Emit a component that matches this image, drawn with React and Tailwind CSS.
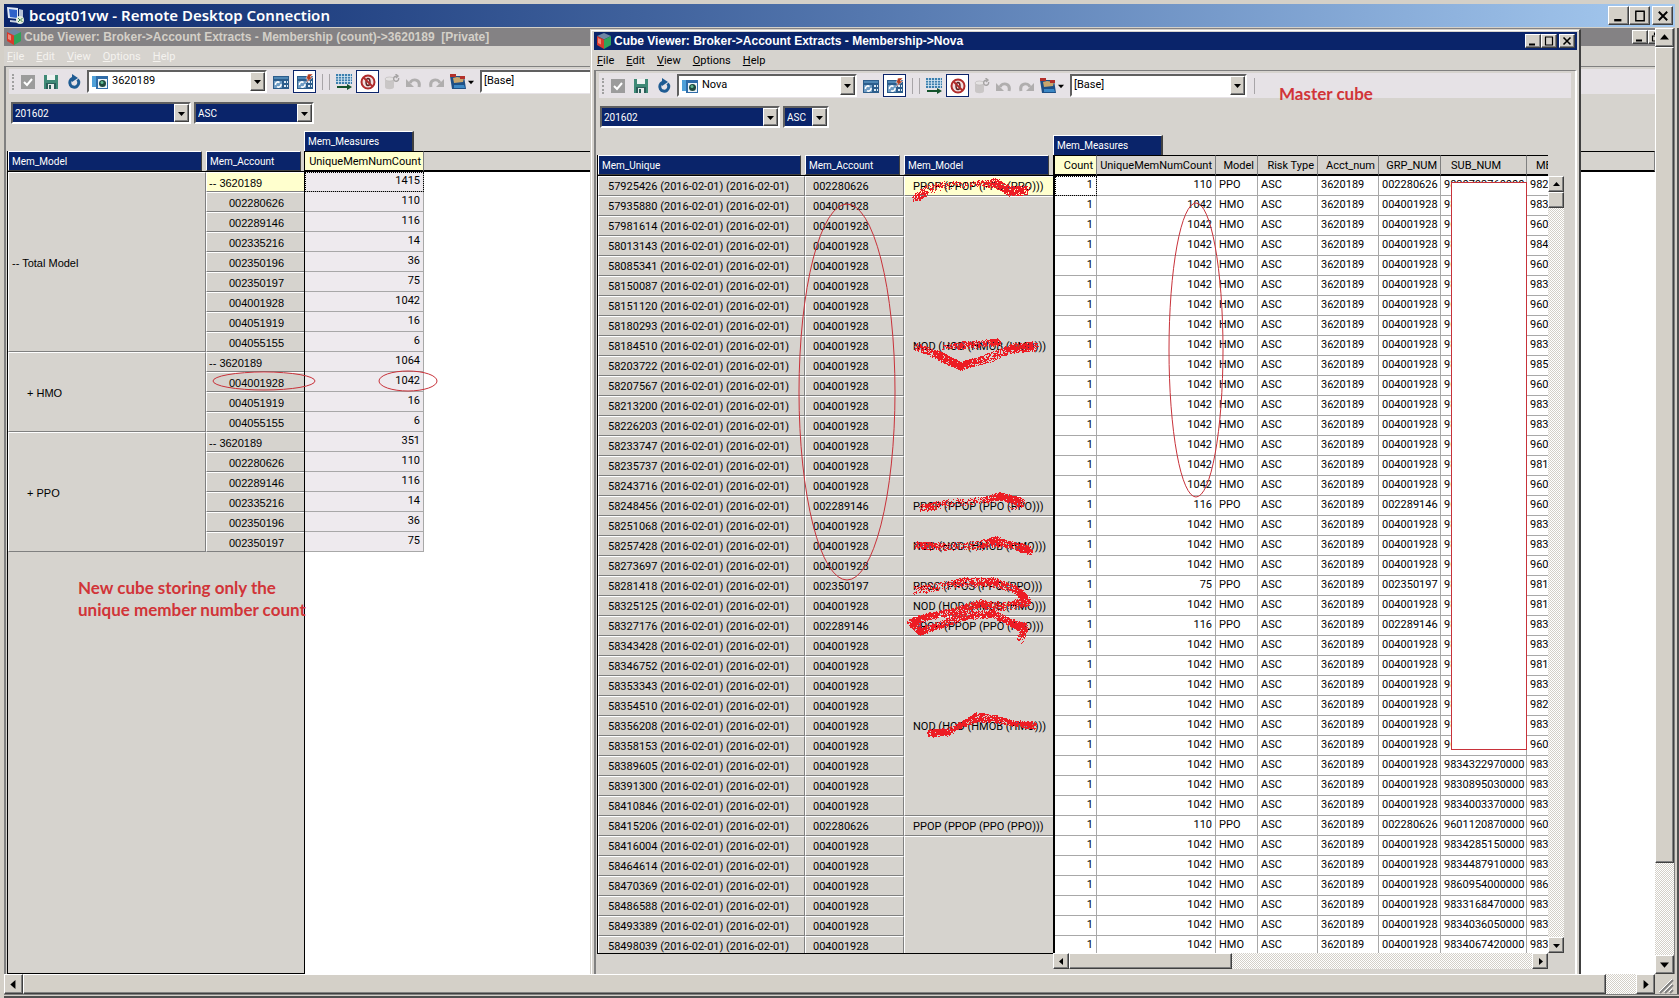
import clsx from "clsx";

const RAISED =
  "border border-t-white border-l-white border-r-[#404040] border-b-[#404040] bg-[#d4d0c8] shadow-[inset_-1px_-1px_0_#808080]";
const SUNKEN =
  "border-2 border-t-[#606060] border-l-[#606060] border-r-white border-b-white";
const TRACK =
  "bg-[repeating-conic-gradient(#ffffff_0_25%,#d4d0c8_0_50%)] bg-[length:2px_2px]";

const NOD = "NOD (HOD (HMOB (HMO)))";
const PPOP = "PPOP (PPOP (PPO (PPO)))";
const PPSC = "PPSC (PPOS (PPO (PPO)))";

// member id, SUB_NUM, start of the MEM_NUM column
const members = [
  ["57925426", "9820793760000", "982"],
  ["57935880", "983", "983"],
  ["57981614", "960", "960"],
  ["58013143", "984", "984"],
  ["58085341", "960", "960"],
  ["58150087", "983", "983"],
  ["58151120", "960", "960"],
  ["58180293", "960", "960"],
  ["58184510", "983", "983"],
  ["58203722", "985", "985"],
  ["58207567", "960", "960"],
  ["58213200", "983", "983"],
  ["58226203", "983", "983"],
  ["58233747", "960", "960"],
  ["58235737", "981", "981"],
  ["58243716", "960", "960"],
  ["58248456", "960", "960"],
  ["58251068", "983", "983"],
  ["58257428", "983", "983"],
  ["58273697", "960", "960"],
  ["58281418", "981", "981"],
  ["58325125", "981", "981"],
  ["58327176", "983", "983"],
  ["58343428", "983", "983"],
  ["58346752", "981", "981"],
  ["58353343", "983", "983"],
  ["58354510", "982", "982"],
  ["58356208", "983", "983"],
  ["58358153", "960", "960"],
  ["58389605", "9834322970000", "983"],
  ["58391300", "9830895030000", "983"],
  ["58410846", "9834003370000", "983"],
  ["58415206", "9601120870000", "960"],
  ["58416004", "9834285150000", "983"],
  ["58464614", "9834487910000", "983"],
  ["58470369", "9860954000000", "986"],
  ["58486588", "9833168470000", "983"],
  ["58493389", "9834036050000", "983"],
  ["58498039", "9834067420000", "983"],
];

// everything that is not listed is 004001928 / 1042 / HMO
const exceptions = {
  0: ["002280626", 110],
  16: ["002289146", 116],
  20: ["002350197", 75],
  22: ["002289146", 116],
  32: ["002280626", 110],
};

const modelSpans = {
  0: [1, PPOP],
  1: [15, NOD],
  16: [1, PPOP],
  17: [3, NOD],
  20: [1, PPSC],
  21: [1, NOD],
  22: [1, PPOP],
  23: [9, NOD],
  32: [1, PPOP],
  33: [6, ""],
};

const countRows = [
  { model: "-- Total Model", span: 9, account: "-- 3620189", value: 1415 },
  { account: "002280626", value: 110 },
  { account: "002289146", value: 116 },
  { account: "002335216", value: 14 },
  { account: "002350196", value: 36 },
  { account: "002350197", value: 75 },
  { account: "004001928", value: 1042 },
  { account: "004051919", value: 16 },
  { account: "004055155", value: 6 },
  { model: "+ HMO", span: 4, account: "-- 3620189", value: 1064 },
  { account: "004001928", value: 1042 },
  { account: "004051919", value: 16 },
  { account: "004055155", value: 6 },
  { model: "+ PPO", span: 6, account: "-- 3620189", value: 351 },
  { account: "002280626", value: 110 },
  { account: "002289146", value: 116 },
  { account: "002335216", value: 14 },
  { account: "002350196", value: 36 },
  { account: "002350197", value: 75 },
];

// brush strokes: [x, y, radius, dots per step]
const scribbles = [
  [[915, 198, 4, 26], [927, 190, 5, 9], [943, 185, 4, 5], [973, 184, 3, 3], [995, 183, 5, 24], [1010, 191, 5, 30], [1025, 190, 5, 50]],
  [[917, 347, 4, 24], [930, 352, 4, 9], [942, 357, 5, 36], [960, 366, 4, 40], [990, 357, 5, 12], [1013, 348, 5, 26], [1033, 346, 5, 36]],
  [[943, 347, 3, 4], [963, 345, 4, 18], [980, 344, 4, 8], [997, 342, 4, 30]],
  [[922, 508, 4, 24], [947, 503, 4, 5], [980, 501, 4, 6], [1000, 496, 4, 36], [1012, 499, 4, 34], [1020, 502, 5, 50]],
  [[1020, 503, 4, 6], [1011, 509, 4, 3]],
  [[917, 545, 4, 26], [947, 547, 4, 6], [980, 545, 5, 9], [995, 541, 5, 36], [1013, 545, 4, 8], [1028, 550, 5, 60]],
  [[916, 590, 5, 16], [940, 586, 4, 5], [963, 582, 5, 14], [993, 582, 5, 24], [1013, 588, 4, 12], [1020, 593, 4, 40], [1026, 601, 5, 40], [1013, 605, 5, 9], [990, 606, 5, 20], [980, 603, 4, 30], [953, 611, 4, 16], [928, 616, 4, 26], [912, 622, 5, 30], [920, 631, 4, 36], [940, 625, 4, 14], [963, 615, 5, 24], [993, 614, 4, 24], [1010, 622, 4, 26], [1023, 627, 5, 40], [1020, 640, 4, 3]],
  [[930, 733, 4, 44], [947, 732, 4, 26], [960, 725, 3, 18], [977, 717, 5, 34], [997, 719, 4, 22], [1013, 723, 3, 16], [1033, 725, 4, 40]],
];

function sprayPath(points) {
  let seed = 7;
  const rand = () => {
    seed = (seed * 16807) % 2147483647;
    return seed / 2147483647;
  };
  let d = "";
  for (let i = 0; i < points.length - 1; i++) {
    const [x0, y0, r0, n0] = points[i];
    const [x1, y1, r1, n1] = points[i + 1];
    const steps = Math.max(2, Math.round(Math.hypot(x1 - x0, y1 - y0) / 2));
    for (let s = 0; s <= steps; s++) {
      const t = s / steps;
      const r = r0 + (r1 - r0) * t;
      const dots = Math.round(n0 + (n1 - n0) * t);
      for (let k = 0; k < dots; k++) {
        const a = rand() * Math.PI * 2;
        const q = Math.sqrt(rand()) * r;
        const x = Math.round(x0 + (x1 - x0) * t + Math.cos(a) * q);
        const y = Math.round(y0 + (y1 - y0) * t + Math.sin(a) * q);
        d += `M${x} ${y}h1v1h-1z`;
      }
    }
  }
  return d;
}

function Arrow({ dir = "down", size = 7 }) {
  const shapes = {
    down: "M0 2h7L3.5 6z",
    up: "M0 5h7L3.5 1z",
    left: "M5 0v7L1 3.5z",
    right: "M2 0v7l4-3.5z",
  };
  return (
    <svg width={size} height={size} viewBox="0 0 7 7" aria-hidden="true">
      <path d={shapes[dir]} fill="#000" />
    </svg>
  );
}

function ArrowButton({ dir, label, className, size }) {
  return (
    <button
      type="button"
      aria-label={label}
      className={clsx(RAISED, "flex shrink-0 items-center justify-center", className)}
    >
      <Arrow dir={dir} size={size} />
    </button>
  );
}

function CaptionButton({ kind, large }) {
  const labels = { min: "Minimize", max: "Maximize", close: "Close", restore: "Restore" };
  return (
    <button
      type="button"
      aria-label={labels[kind]}
      className={clsx(
        RAISED,
        "flex shrink-0 items-center justify-center",
        large ? "h-[19px] w-[21px]" : "h-[14px] w-[16px]",
        kind === "close" && "ml-[2px]"
      )}
    >
      <svg
        width={large ? 12 : 10}
        height={large ? 12 : 10}
        viewBox="0 0 10 10"
        fill="none"
        stroke="#000"
        aria-hidden="true"
      >
        {kind === "min" && <path d="M1 8.5h6" strokeWidth="2" />}
        {kind === "max" && <path d="M1 1h8M1.5 1v8h7V1" strokeWidth="1.2" />}
        {kind === "close" && <path d="M1.5 1.5l7 7M8.5 1.5l-7 7" strokeWidth="1.6" />}
        {kind === "restore" && <path d="M3.5 3V1h5v5h-2M1.5 4h5v5h-5z" strokeWidth="1.2" />}
      </svg>
    </button>
  );
}

function CubeIcon() {
  return (
    <svg width="16" height="16" viewBox="0 0 16 16" className="shrink-0" aria-hidden="true">
      <path d="M8 0l7 3-7 3.500L1 3z" fill="#6f86a4" />
      <path d="M1 3l7 3.500V16l-7-4z" fill="#d8392b" />
      <path d="M15 3L8 6.500V16l7-4z" fill="#2fa35a" />
      <path d="M2 5l3 1.500v5L2 10z" fill="#f08a78" />
    </svg>
  );
}

function Icon({ name }) {
  return (
    <svg width="16" height="16" viewBox="0 0 16 16" fill="none" aria-hidden="true">
      {name === "check" && (
        <>
          <path d="M1 1h14v14H1z" fill="#9c9c9c" />
          <path d="M4 8l3 3 5-6" stroke="#fff" strokeWidth="2" />
        </>
      )}
      {name === "save" && (
        <>
          <path d="M1 1h14v14H1z" fill="#3f8a76" />
          <path d="M4 1h8v5H4z" fill="#eef3f1" />
          <path d="M3 9h10v6H3z" fill="#2b5f5a" />
          <path d="M5 10h6v5H5z" fill="#e8ecea" />
          <path d="M6 11h2v4H6z" fill="#2b5f5a" />
        </>
      )}
      {name === "refresh" && (
        <>
          <path d="M11.500 5.500a4.500 4.500 0 1 1-5-1" stroke="#1f5c93" strokeWidth="3" />
          <path d="M6 0l6 4-6 4z" fill="#1f5c93" />
        </>
      )}
      {name === "view" && (
        <>
          <path d="M0 2h6v11H0z" fill="#4fa0d8" />
          <path d="M4 2h12v13H4z" fill="#2f6ca8" />
          <path d="M6 5h9v9H6z" fill="#eef4f8" />
          <circle cx="10.500" cy="9.500" r="3.500" fill="#1f4a3e" />
          <circle cx="10" cy="8.500" r="1.500" fill="#5fb890" />
        </>
      )}
      {(name === "recalc" || name === "autocalc") && (
        <>
          <path d="M0 2h16v13H0z" fill="#2c5d8c" />
          <path d="M1 3h14v2H1z" fill="#4f86b4" />
          <path d="M1 7h8v7H1z" fill="#6f9cc4" />
          <path d="M2.500 11a2.500 2.500 0 0 1 4-2.500M8 10a2.500 2.500 0 0 1-4 2.500" stroke="#fff" strokeWidth="1.600" />
          <path d="M11 7h2v2h-2zM14 7h1v2h-1zM11 11h2v2h-2zM14 11h1v2h-1z" fill="#dfeaf4" />
        </>
      )}
      {name === "autocalc" && <path d="M11 0h5l-3 3h3l-7 6 2-4H9z" fill="#b23a1e" stroke="#fff" strokeWidth=".5" />}
      {name === "grid" && (
        <>
          <path d="M0 0h16v10H0z" fill="#3d7fae" />
          <path d="M0 2.500h16M0 5h16M0 7.500h16M2.500 0v10M5.500 0v10M8.500 0v10M11.500 0v10M14.500 0v10" stroke="#d8e8f2" strokeWidth=".8" />
          <path d="M1 12h10V10l5 3-5 3v-2H1z" fill="#14532d" />
        </>
      )}
      {name === "suppress" && (
        <>
          <circle cx="8" cy="8" r="6.500" stroke="#b02a2a" strokeWidth="2" fill="#f3dede" />
          <ellipse cx="8" cy="8" rx="2" ry="3.500" stroke="#5a2020" strokeWidth="1.400" />
          <path d="M3.500 3.500l9 9" stroke="#b02a2a" strokeWidth="1.800" />
        </>
      )}
      {name === "stack" && (
        <>
          <path d="M1 5v8c0 3 9 3 9 0V5z" fill="#c9c6c6" />
          <ellipse cx="5.500" cy="5" rx="4.500" ry="2" fill="#e4e2e2" stroke="#b8b5b5" strokeWidth=".6" />
          <path d="M14.500 4a2.500 2.500 0 1 1-2-1.700M11.500 0l2.500 2-2 2" stroke="#a5a3a3" strokeWidth="1.400" />
        </>
      )}
      {name === "undo" && (
        <>
          <path d="M4 9c2-5 11-4 9 4" stroke="#b0aeae" strokeWidth="3" />
          <path d="M0 5v8h8z" fill="#b0aeae" />
        </>
      )}
      {name === "redo" && (
        <>
          <path d="M12 9C10 4 1 5 3 13" stroke="#b0aeae" strokeWidth="3" />
          <path d="M16 5v8H8z" fill="#b0aeae" />
        </>
      )}
      {name === "sandbox" && (
        <>
          <path d="M0 2h14l2 13H2z" fill="#1d4f86" />
          <path d="M3 4l4-1 7 1-1 4-9 1z" fill="#c8a66c" />
          <path d="M0 0h6v3H0zM10 2h5v3h-5z" fill="#b3302a" />
          <path d="M4 11h10l1 3H4z" fill="#3c87c4" />
        </>
      )}
    </svg>
  );
}

function ToolButton({ name, label, pressed }) {
  return (
    <button
      type="button"
      aria-label={label}
      className={clsx(
        "flex shrink-0 items-center justify-center",
        pressed ? "h-[23px] w-[23px] border border-[#0a246a] bg-white" : "h-[22px] w-[16px]"
      )}
    >
      <Icon name={name} />
    </button>
  );
}

function ComboBox({ label, value, icon, className, dark }) {
  return (
    <div
      className={clsx(
        SUNKEN,
        "flex shrink-0 items-center",
        dark ? "h-[22px] bg-[#0a246a] text-[10px] text-white" : "h-[23px] bg-white text-[11px]",
        className
      )}
    >
      {icon && (
        <span className="ml-[3px] flex">
          <Icon name="view" />
        </span>
      )}
      <select
        aria-label={label}
        defaultValue={value}
        className={clsx(
          "h-full min-w-0 flex-1 appearance-none bg-transparent outline-none",
          icon ? "pl-1" : "pl-[2px]"
        )}
      >
        <option value={value}>{value}</option>
      </select>
      <span className={clsx(RAISED, "flex h-full w-[15px] shrink-0 items-center justify-center")}>
        <Arrow />
      </span>
    </div>
  );
}

function Separator() {
  return <span className="h-4 w-px shrink-0 bg-[#a8a5a8]" />;
}

function Toolbar({ view, wide }) {
  return (
    <div className={clsx("ml-[3px] mt-[2px] flex h-[25px] items-center bg-[#e6e2e6]", wide ? "mr-0" : "mr-1")}>
      <span className="ml-[3px] mr-[6px] h-4 shrink-0 border-l-2 border-dotted border-[#a0a0a0]" />
      <div className="flex shrink-0 items-center gap-[7px]">
        <ToolButton name="check" label="Commit" />
        <ToolButton name="save" label="Save" />
        <ToolButton name="refresh" label="Reload" />
      </div>
      <ComboBox label="View" value={view} icon className="ml-[5px] w-[180px]" />
      <div className="ml-[6px] flex shrink-0 items-center gap-1">
        <ToolButton name="recalc" label="Recalculate" />
        <ToolButton name="autocalc" label="Automatic recalculate" pressed />
      </div>
      <div className="ml-[6px] mr-[6px] flex shrink-0 gap-[6px]">
        <Separator />
        <Separator />
      </div>
      <div className="flex shrink-0 items-center gap-1">
        <ToolButton name="grid" label="Export" />
        <ToolButton name="suppress" label="Suppress zeros" pressed />
      </div>
      <div className="ml-[5px] flex shrink-0 items-center gap-[6px]">
        <ToolButton name="stack" label="Reset" />
        <ToolButton name="undo" label="Undo" />
        <ToolButton name="redo" label="Redo" />
        <ToolButton name="sandbox" label="Sandbox" />
      </div>
      <span className="ml-[2px] mr-[6px] shrink-0">
        <Arrow size={6} />
      </span>
      <ComboBox label="Sandbox name" value="[Base]" className="w-[177px]" />
      <span className="ml-[7px] flex">
        <Separator />
      </span>
    </div>
  );
}

function TitleBar({ title, active, buttons }) {
  return (
    <div
      className={clsx(
        "flex h-[18px] shrink-0 items-center overflow-hidden pl-[2px] font-bold",
        active ? "bg-[#0a246a] text-white" : "bg-[#848284] text-[#d4d0c8]"
      )}
    >
      <CubeIcon />
      <h2 className="ml-[2px] flex-1 truncate whitespace-pre font-['Liberation_Sans',Arial,sans-serif] text-[12px] leading-[18px]">
        {title}
      </h2>
      <div className={clsx("flex shrink-0", active ? "mr-[2px]" : "-mr-[9px]")}>
        {buttons.map((kind) => (
          <CaptionButton key={kind} kind={kind} />
        ))}
      </div>
    </div>
  );
}

function MenuBar({ active }) {
  return (
    <nav className={clsx("flex h-[20px] shrink-0 items-center gap-[12px] pt-px pl-[3px]", active ? "text-black" : "text-[#f4f2ee]")}>
      {["File", "Edit", "View", "Options", "Help"].map((item) => (
        <button key={item} type="button" className="leading-[19px]">
          <span className="underline">{item[0]}</span>
          {item.slice(1)}
        </button>
      ))}
    </nav>
  );
}

function DimensionHeader({ children, last }) {
  return (
    <th className="h-[21px] border-b border-black p-0 text-left font-normal">
      <div
        className={clsx(
          "h-[20px] border border-t-white border-l-white border-r-[#404040] border-b-[#404040] bg-[#0a246a] pl-[3px] text-[10px] leading-[19px] text-white",
          last ? "mr-[3px]" : "mr-[4px]"
        )}
      >
        {children}
      </div>
    </th>
  );
}

function MeasuresTab() {
  return (
    <div className="h-[20px] w-[110px] border-t border-l border-r-2 border-t-white border-l-white border-r-[#404040] bg-[#0a246a] pl-[3px] text-[10px] leading-[20px] text-white">
      Mem_Measures
    </div>
  );
}

function LabelCell({ children, className, ...rest }) {
  return (
    <td
      className={clsx(
        "h-[20px] border-t border-b border-l border-t-white border-l-white border-b-[#808080] pt-[2px] pr-0 pb-0 align-middle leading-[16px] whitespace-nowrap",
        className
      )}
      {...rest}
    >
      {children}
    </td>
  );
}

function DataCell({ children, right, className }) {
  return (
    <td
      className={clsx(
        "h-[20px] border-r border-b border-[#a8a8a8] p-0 align-top leading-[17px] whitespace-nowrap",
        right ? "pr-[3px] text-right" : "pl-[3px]",
        className
      )}
    >
      {children}
    </td>
  );
}

function ColumnHeader({ children, className }) {
  return (
    <th
      className={clsx(
        "h-[21px] border-t border-r border-b-2 border-y-black border-r-[#808080] pt-[2px] pb-0 pl-0 font-normal leading-[16px] whitespace-nowrap",
        className
      )}
    >
      {children}
    </th>
  );
}

const focusCell = "outline outline-dotted outline-1 -outline-offset-1 outline-black";

function CountGrid() {
  return (
    <div className="flex min-h-0 flex-1 pl-px pt-[7px]">
      <div className="flex w-[297px] shrink-0 flex-col pt-[20px]">
        <div className="flex-1 border-b border-l border-black">
          <table className="w-full table-fixed border-separate border-spacing-0">
            <colgroup>
              <col className="w-[198px]" />
              <col />
            </colgroup>
            <thead>
              <tr>
                <DimensionHeader>Mem_Model</DimensionHeader>
                <DimensionHeader last>Mem_Account</DimensionHeader>
              </tr>
            </thead>
            <tbody className="font-['Liberation_Sans',Arial,sans-serif]">
              {countRows.map((row, i) => (
                <tr key={i}>
                  {row.model && (
                    <LabelCell
                      rowSpan={row.span}
                      className={clsx("border-r border-r-[#808080]", i === 0 ? "pl-[3px]" : "pl-[18px]")}
                    >
                      {row.model}
                    </LabelCell>
                  )}
                  <LabelCell
                    className={clsx(row.account.startsWith("--") ? "pl-[2px]" : "pl-[22px]", i === 0 && "bg-[#ffffce]")}
                  >
                    {row.account}
                  </LabelCell>
                </tr>
              ))}
            </tbody>
          </table>
        </div>
      </div>
      <div className="flex min-w-0 flex-1 flex-col">
        <MeasuresTab />
        <div className="flex-1 overflow-hidden border-l border-black bg-white">
          <table className="w-full table-fixed border-separate border-spacing-0">
            <colgroup>
              <col className="w-[119px]" />
              <col />
            </colgroup>
            <thead>
              <tr className="bg-[#d6d3ce]">
                <ColumnHeader className="bg-[#ffffce] pr-[2px] text-right">UniqueMemNumCount</ColumnHeader>
                <ColumnHeader />
              </tr>
            </thead>
            <tbody>
              {countRows.map((row, i) => (
                <tr key={i}>
                  <DataCell right className={clsx("bg-[#eeeaee]", i === 0 && focusCell)}>
                    {row.value}
                  </DataCell>
                  <td className="bg-white p-0" />
                </tr>
              ))}
            </tbody>
          </table>
        </div>
      </div>
    </div>
  );
}

const measureColumns = [
  ["Count", "bg-[#ffffce] pr-[3px] text-right"],
  ["UniqueMemNumCount", "pr-[3px] text-right"],
  ["Model", "pr-[3px] text-right"],
  ["Risk Type", "pr-[3px] text-right"],
  ["Acct_num", "pr-[3px] text-right"],
  ["GRP_NUM", "pr-[3px] text-right"],
  ["SUB_NUM", "pl-[10px] text-left"],
  ["MEM_NUM", "pl-[9px] text-left"],
];

function MasterGrid() {
  return (
    <div className="flex min-h-0 flex-1 pb-[5px] pl-px pt-[7px]">
      <div className="flex w-[456px] shrink-0 flex-col pb-[15px] pt-[20px]">
        <div className="min-h-0 flex-1 overflow-hidden border-b border-l border-black">
          <table className="w-full table-fixed border-separate border-spacing-0">
            <colgroup>
              <col className="w-[207px]" />
              <col className="w-[99px]" />
              <col />
            </colgroup>
            <thead>
              <tr>
                <DimensionHeader>Mem_Unique</DimensionHeader>
                <DimensionHeader>Mem_Account</DimensionHeader>
                <DimensionHeader>Mem_Model</DimensionHeader>
              </tr>
            </thead>
            <tbody>
              {members.map(([id], i) => {
                const span = modelSpans[i];
                return (
                  <tr key={id}>
                    <LabelCell className="border-r border-r-[#808080] pl-[9px]">
                      {id} (2016-02-01) (2016-02-01)
                    </LabelCell>
                    <LabelCell className="border-r border-r-[#808080] pl-[7px]">
                      {exceptions[i] ? exceptions[i][0] : "004001928"}
                    </LabelCell>
                    {span && (
                      <LabelCell rowSpan={span[0]} className={clsx("pl-[8px]", i === 0 && "bg-[#ffffce]")}>
                        {span[1]}
                      </LabelCell>
                    )}
                  </tr>
                );
              })}
            </tbody>
          </table>
        </div>
      </div>
      <div className="mr-[11px] flex min-w-0 flex-1 flex-col">
        <MeasuresTab />
        <div className="flex min-h-0 flex-1">
          <div className="min-w-0 flex-1 overflow-hidden border-l-2 border-black bg-white">
            <table className="w-[533px] table-fixed border-separate border-spacing-0">
              <colgroup>
                <col className="w-[42px]" />
                <col className="w-[119px]" />
                <col className="w-[42px]" />
                <col className="w-[60px]" />
                <col className="w-[61px]" />
                <col className="w-[62px]" />
                <col className="w-[86px]" />
                <col className="w-[61px]" />
              </colgroup>
              <thead>
                <tr className="bg-[#d6d3ce]">
                  {measureColumns.map(([name, style]) => (
                    <ColumnHeader key={name} className={style}>
                      {name}
                    </ColumnHeader>
                  ))}
                </tr>
              </thead>
              <tbody>
                {members.map(([id, sub, mem], i) => {
                  const [account, count] = exceptions[i] ?? ["004001928", 1042];
                  return (
                    <tr key={id}>
                      <DataCell right className={i === 0 && focusCell}>1</DataCell>
                      <DataCell right>{count}</DataCell>
                      <DataCell>{exceptions[i] ? "PPO" : "HMO"}</DataCell>
                      <DataCell>ASC</DataCell>
                      <DataCell>3620189</DataCell>
                      <DataCell>{account}</DataCell>
                      <DataCell>{sub}</DataCell>
                      <DataCell>{mem}</DataCell>
                    </tr>
                  );
                })}
              </tbody>
            </table>
          </div>
          <div className={clsx("mt-[21px] flex w-4 shrink-0 flex-col", TRACK)}>
            <ArrowButton dir="up" label="Scroll up" className="h-[16px]" />
            <div className={clsx(RAISED, "h-[16px]")} />
            <ArrowButton dir="down" label="Scroll down" className="mt-auto h-[16px]" />
          </div>
        </div>
        <div className="flex h-[16px] shrink-0">
          <div className={clsx("flex flex-1", TRACK)}>
            <ArrowButton dir="left" label="Scroll left" className="w-[16px]" />
            <div className={clsx(RAISED, "w-[163px]")} />
            <ArrowButton dir="right" label="Scroll right" className="ml-auto w-[16px]" />
          </div>
          <span className="w-4" />
        </div>
      </div>
    </div>
  );
}

function CubeWindow({ title, view, active, buttons, secondWidth, children }) {
  return (
    <>
      <TitleBar title={title} active={active} buttons={buttons} />
      <MenuBar active={active} />
      <div
        className={clsx(
          "flex min-h-0 flex-1 flex-col border-t border-l-2 border-[#808080]",
          active && "border-r-2 border-b border-r-white"
        )}
      >
        <Toolbar view={view} wide={!active} />
        <div className={clsx("mt-[8px] flex gap-[3px]", active ? "ml-[4px]" : "ml-[5px]")}>
          <ComboBox dark label="Period" value="201602" className="w-[180px]" />
          <ComboBox dark label="Risk type" value="ASC" className={secondWidth} />
        </div>
        {children}
      </div>
    </>
  );
}

function Annotations() {
  return (
    <div className="pointer-events-none absolute inset-0">
      <div className="absolute left-[1451px] top-[182px] h-[568px] w-[76px] border border-[#c8323a] bg-white" />
      <svg className="absolute left-0 top-0" width="1679" height="998" aria-hidden="true">
        <g fill="none" stroke="#c8323a">
          <ellipse cx="847" cy="392" rx="48" ry="188" />
          <ellipse cx="1196" cy="350" rx="27" ry="147" />
          <ellipse cx="264" cy="381" rx="51" ry="9" />
          <ellipse cx="408" cy="381" rx="29" ry="10" />
        </g>
        {scribbles.map((points, i) => (
          <path key={i} d={sprayPath(points)} fill="#ed1c24" shapeRendering="crispEdges" />
        ))}
      </svg>
      <p className="absolute left-[1279px] top-[83px] font-[Lato,sans-serif] text-[17px] leading-[22px] font-bold text-[#d13438]">
        Master cube
      </p>
      <p className="absolute left-[78px] top-[577px] font-[Lato,sans-serif] text-[17px] leading-[22px] font-bold whitespace-nowrap text-[#d13438]">
        New cube storing only the
        <br />
        unique member number count
      </p>
    </div>
  );
}

function RemoteIcon() {
  return (
    <svg width="18" height="18" viewBox="0 0 18 18" className="shrink-0" aria-hidden="true">
      <path d="M0 0l11 1v11L1 11z" fill="#dfe9f7" />
      <path d="M2 2l8 1v8l-7-1z" fill="#2f62c9" />
      <path d="M12 2l4 1v12l-4-1z" fill="#b8c4d8" />
      <path d="M3 13l8 1 1 2-9-1z" fill="#c9d2e0" />
      <circle cx="13" cy="13" r="4" fill="#e4ebe0" />
      <path d="M11 11l2 2-2 2M15.500 11l-2 2 2 2" stroke="#3f8a3f" fill="none" />
    </svg>
  );
}

export default function App() {
  return (
    <div className="relative flex h-screen flex-col overflow-hidden bg-[#d4d0c8] pt-1 pl-1 font-[Roboto,Arial,sans-serif] text-[11px] text-black">
      <header className="mr-1 flex h-[23px] shrink-0 items-center bg-linear-to-r from-[#0a246a] to-[#a6caf0] pl-[3px] pr-[2px]">
        <RemoteIcon />
        <h1 className="ml-1 flex-1 font-['Noto_Sans',sans-serif] text-[15px] leading-[23px] font-semibold text-white">
          bcogt01vw - Remote Desktop Connection
        </h1>
        <CaptionButton kind="min" large />
        <CaptionButton kind="max" large />
        <CaptionButton kind="close" large />
      </header>
      <div className="mt-px flex min-h-0 flex-1">
        <main className="relative flex min-w-0 flex-1 flex-col overflow-hidden bg-[#d6d3ce]">
          <CubeWindow
            title="Cube Viewer: Broker->Account Extracts - Membership (count)->3620189  [Private]"
            view="3620189"
            buttons={["min", "restore"]}
            secondWidth="w-[120px]"
          >
            <CountGrid />
          </CubeWindow>
          <section className="absolute -bottom-px left-[586px] right-[74px] top-px flex flex-col border-l border-r-2 border-t border-l-[#d4d0c8] border-r-[#404040] border-t-[#d4d0c8] bg-[#d6d3ce] pl-[3px] pr-[2px] pt-[2px] shadow-[inset_1px_1px_0_#fff]">
            <CubeWindow
              active
              title="Cube Viewer: Broker->Account Extracts - Membership->Nova"
              view="Nova"
              buttons={["min", "max", "close"]}
              secondWidth="w-[46px]"
            >
              <MasterGrid />
            </CubeWindow>
          </section>
        </main>
        <div className={clsx("flex w-[19px] shrink-0 flex-col", TRACK)}>
          <ArrowButton dir="up" label="Scroll desktop up" size={9} className="h-[19px]" />
          <div className={clsx(RAISED, "h-[816px]")} />
          <ArrowButton dir="down" label="Scroll desktop down" size={9} className="mt-auto h-[19px]" />
        </div>
        <span className="w-[5px] shrink-0 border-l border-r-2 border-l-[#808080] border-r-[#505050]" />
      </div>
      <div className="flex h-[20px] shrink-0">
        <div className={clsx("flex flex-1", TRACK)}>
          <ArrowButton dir="left" label="Scroll desktop left" size={9} className="w-[19px]" />
          <div className={clsx(RAISED, "w-[1583px] shrink")} />
          <ArrowButton dir="right" label="Scroll desktop right" size={9} className="ml-auto w-[19px]" />
        </div>
        <svg width="19" height="20" viewBox="0 0 19 20" className="shrink-0" aria-hidden="true">
          <path d="M5 19L18 6M10 19l8-8M15 19l3-3" stroke="#808080" strokeWidth="2" />
          <path d="M4 18L17 5M9 18l8-8M14 18l3-3" stroke="#fff" />
        </svg>
        <span className="w-[5px] border-r-2 border-r-[#505050]" />
      </div>
      <div className="h-1 shrink-0 border-b-2 border-t border-t-[#808080] border-b-[#505050]" />
      <Annotations />
    </div>
  );
}
